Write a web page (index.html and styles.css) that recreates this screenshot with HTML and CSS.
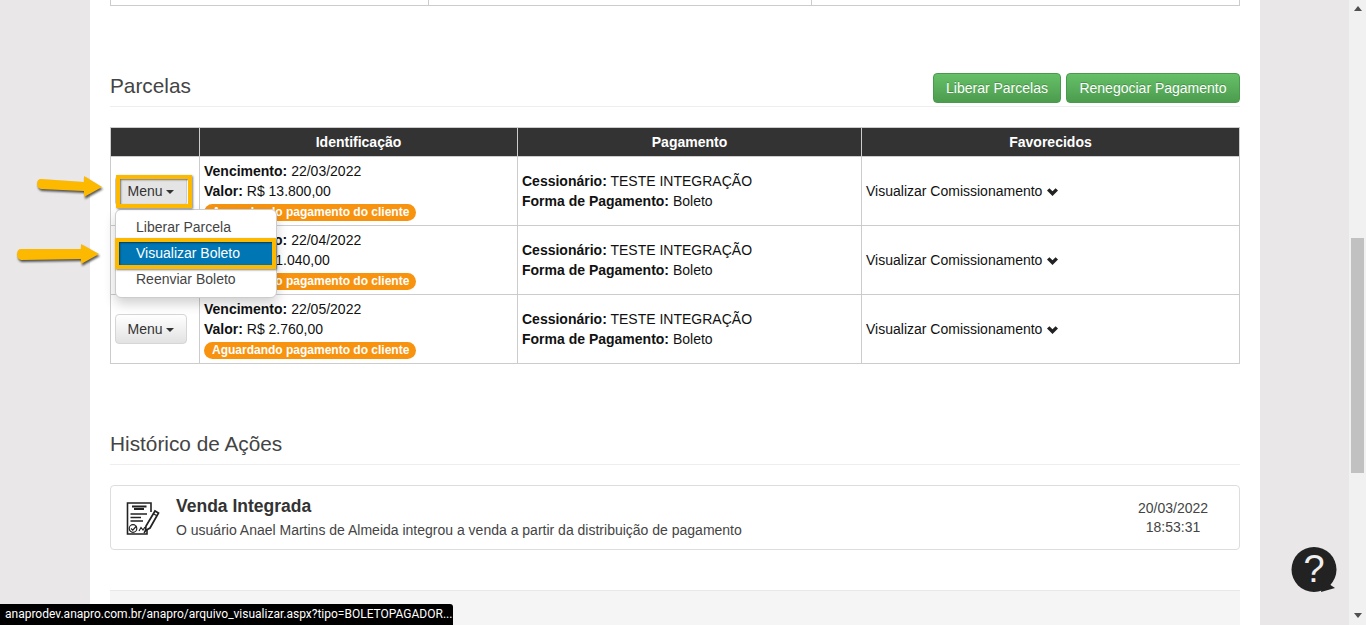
FILE: index.html
```html
<!DOCTYPE html>
<html lang="pt-BR">
<head>
<meta charset="utf-8">
<title>Parcelas</title>
<link rel="stylesheet" href="styles.css">
</head>
<body>
<div class="viewport">
  <div class="page">
    <main class="sheet">
      <table class="top-table">
        <tr><td class="top-a"></td><td class="top-b"></td><td></td></tr>
      </table>

      <section class="section-parcelas">
        <header class="section-head">
          <h3 class="section-title">Parcelas</h3>
          <div class="actions">
            <button class="btn btn-green">Liberar Parcelas</button>
            <button class="btn btn-green">Renegociar Pagamento</button>
          </div>
        </header>

        <table class="grid">
          <thead>
            <tr>
              <th class="col-menu"></th>
              <th class="col-id">Identificação</th>
              <th class="col-pay">Pagamento</th>
              <th class="col-fav">Favorecidos</th>
            </tr>
          </thead>
          <tbody>
            <tr>
              <td class="cell-menu">
                <button class="btn btn-menu is-open">Menu <span class="caret"></span></button>
                <ul class="dropdown">
                  <li class="dropdown-item">Liberar Parcela</li>
                  <li class="dropdown-item is-active">Visualizar Boleto</li>
                  <li class="dropdown-item">Reenviar Boleto</li>
                </ul>
              </td>
              <td>
                <div><b>Vencimento:</b> 22/03/2022</div>
                <div><b>Valor:</b> R$ 13.800,00</div>
                <div class="badge-line"><span class="badge">Aguardando pagamento do cliente</span></div>
              </td>
              <td>
                <div><b>Cessionário:</b> TESTE INTEGRAÇÃO</div>
                <div><b>Forma de Pagamento:</b> Boleto</div>
              </td>
              <td>Visualizar Comissionamento <svg class="chev" viewBox="0 0 11 8"><path d="M0 2.6 L2.4 0.2 L5.5 3.2 L8.6 0.2 L11 2.6 L5.5 8 Z"/></svg></td>
            </tr>
            <tr>
              <td class="cell-menu"></td>
              <td>
                <div><b>Vencimento:</b> 22/04/2022</div>
                <div><b>Valor:</b> R$ 11.040,00</div>
                <div class="badge-line"><span class="badge">Aguardando pagamento do cliente</span></div>
              </td>
              <td>
                <div><b>Cessionário:</b> TESTE INTEGRAÇÃO</div>
                <div><b>Forma de Pagamento:</b> Boleto</div>
              </td>
              <td>Visualizar Comissionamento <svg class="chev" viewBox="0 0 11 8"><path d="M0 2.6 L2.4 0.2 L5.5 3.2 L8.6 0.2 L11 2.6 L5.5 8 Z"/></svg></td>
            </tr>
            <tr>
              <td class="cell-menu"><button class="btn btn-menu">Menu <span class="caret"></span></button></td>
              <td>
                <div><b>Vencimento:</b> 22/05/2022</div>
                <div><b>Valor:</b> R$ 2.760,00</div>
                <div class="badge-line"><span class="badge">Aguardando pagamento do cliente</span></div>
              </td>
              <td>
                <div><b>Cessionário:</b> TESTE INTEGRAÇÃO</div>
                <div><b>Forma de Pagamento:</b> Boleto</div>
              </td>
              <td>Visualizar Comissionamento <svg class="chev" viewBox="0 0 11 8"><path d="M0 2.6 L2.4 0.2 L5.5 3.2 L8.6 0.2 L11 2.6 L5.5 8 Z"/></svg></td>
            </tr>
          </tbody>
        </table>
      </section>

      <section class="section-historico">
        <header class="section-head plain">
          <h3 class="section-title">Histórico de Ações</h3>
        </header>
        <article class="event">
          <svg class="event-icon" viewBox="0 0 34 34" fill="none" stroke="#222">
            <path d="M21 25 V32 H1.5 V1 H25 V10" stroke-width="1.6"/>
            <path d="M6 4.5 H20.5 M8 7 H18" stroke-width="2.2"/>
            <path d="M4.5 12 H21 M4.5 15.5 H15 M4.5 19 H17" stroke-width="1.3"/>
            <circle cx="7" cy="26.5" r="3.8" stroke-width="1.2"/>
            <path d="M5 26.5 L6.8 28.2 L10.5 24" stroke-width="1.2"/>
            <path d="M13 29 L15 25.5 L17 28 L19 25" stroke-width="1.2"/>
            <path d="M19.5 28.5 L20 24 L29 9 L32.5 11 L24 26 Z" fill="#fff" stroke-width="1.7"/>
            <path d="M27 11.5 L30.5 13.5 M18 31 L20 28" stroke-width="1.4"/>
          </svg>
          <div class="event-body">
            <h4 class="event-title">Venda Integrada</h4>
            <p class="event-text">O usuário Anael Martins de Almeida integrou a venda a partir da distribuição de pagamento</p>
          </div>
          <div class="event-date">20/03/2022<br>18:53:31</div>
        </article>
      </section>

      <div class="footer-panel"></div>
    </main>
  </div>

  <aside class="scrollbar">
    <span class="sb-up"></span>
    <span class="sb-thumb"></span>
    <span class="sb-down"></span>
  </aside>

  <svg class="arrow arrow-one" viewBox="0 0 70 26"><path d="M5 5 L48 8 L48 2 L66 13 L48 23 L48 17 L5 15 Q1 14 1 10 Q1 5 5 5 Z"/></svg>
  <svg class="arrow arrow-two" viewBox="0 0 88 27"><path d="M5 6 L65 6 L65 1 L83 11 L65 21 L65 16 L5 17 Q1 16 1 11.5 Q1 6 5 6 Z"/></svg>
  <span class="mark mark-button"></span>
  <span class="mark mark-item"></span>

  <div class="help">
    <svg class="help-bubble" viewBox="0 0 46 47"><circle cx="23" cy="23.5" r="22.5"/><path d="M32 34 L44 42 L30 46 Z"/></svg>
    <span class="help-mark">?</span>
  </div>

  <div class="status">anaprodev.anapro.com.br/anapro/arquivo_visualizar.aspx?tipo=BOLETOPAGADOR...</div>
</div>
</body>
</html>
```

FILE: styles.css
```css
* { box-sizing: border-box; }
html, body { margin: 0; height: 100%; overflow: hidden; }
body {
  font-family: "Liberation Sans", Arial, sans-serif;
  font-size: 14px;
  line-height: 20px;
  color: #333;
  background: #e9e7e8;
}
.viewport { position: relative; display: flex; height: 625px; overflow: hidden; }
.page { flex: 1; min-width: 0; padding: 0 89px 0 90px; }
.sheet { width: 1170px; height: 625px; padding: 0 20px; background: #fff; overflow: hidden; }

.top-table { width: 1130px; height: 5px; border-collapse: collapse; table-layout: fixed; }
.top-table td { height: 5px; padding: 0; border: 1px solid #ccc; border-top: 0; }
.top-a { width: 318px; }
.top-b { width: 383px; }

.section-parcelas { margin-top: 67px; }
.section-head {
  display: flex;
  justify-content: space-between;
  align-items: flex-end;
  height: 34px;
  padding-bottom: 3px;
  border-bottom: 1px solid #eee;
}
.section-title { margin: 0 0 5px; font-size: 20.8px; font-weight: 400; line-height: 24px; color: #444; }
.actions { display: flex; gap: 5px; }

.btn {
  font-family: inherit;
  font-size: 14px;
  line-height: 20px;
  border-radius: 4px;
  border: 1px solid transparent;
  cursor: pointer;
}
.btn-green {
  height: 30px;
  padding: 0 12px;
  color: #fff;
  background: linear-gradient(#66c068, #4c9c4e);
  border-color: #4a9a4c;
  text-shadow: 0 -1px 0 rgba(0, 0, 0, .2);
}
.actions .btn-green:first-child { width: 128px; }
.actions .btn-green:last-child { width: 174px; }

.grid { width: 1130px; margin-top: 20px; border-collapse: collapse; table-layout: fixed; color: #111; }
.grid th {
  height: 29px;
  padding: 0;
  color: #fff;
  background: #333;
  border: 1px solid #ccc;
  font-size: 14px;
  text-align: center;
}
.col-menu { width: 89px; }
.col-id { width: 318px; }
.col-pay { width: 344px; }
.grid td { height: 69px; padding: 4px; border: 1px solid #ccc; vertical-align: middle; }
.grid td.cell-menu { position: relative; padding: 4px; }
.badge-line { height: 20px; line-height: 20px; }
.badge {
  display: inline-block;
  height: 17px;
  margin-top: 3px;
  padding: 0 7px 0 8px;
  border-radius: 9px;
  background: #f7930e;
  color: #fff;
  font-size: 12px;
  font-weight: 700;
  line-height: 17px;
  vertical-align: top;
}
.chev { width: 11px; height: 8px; margin-left: 1px; fill: #222; }

.btn-menu {
  display: block;
  width: 72px;
  height: 30px;
  padding: 0;
  color: #333;
  background: linear-gradient(#fff, #e2e2e2);
  border-color: #d6d6d6;
}
.btn-menu.is-open { background: #e4e4e4; border-color: #ccc; }
.caret {
  display: inline-block;
  width: 0;
  height: 0;
  vertical-align: middle;
  border-top: 4px solid #333;
  border-left: 4px solid transparent;
  border-right: 4px solid transparent;
}
.dropdown {
  position: absolute;
  top: 52px;
  left: 4px;
  z-index: 5;
  width: 162px;
  height: 89px;
  margin: 0;
  padding: 5px 0;
  list-style: none;
  background: #fff;
  border: 1px solid #ccc;
  border-radius: 6px;
  box-shadow: 0 6px 12px rgba(0, 0, 0, .18);
}
.dropdown-item { height: 26px; padding: 2px 20px; color: #444; }
.dropdown-item.is-active { color: #fff; background: #0076b5; }

.section-historico { margin-top: 64px; }
.section-head.plain { height: 37px; }
.event {
  display: flex;
  align-items: flex-start;
  height: 65px;
  margin-top: 20px;
  border: 1px solid #ddd;
  border-radius: 4px;
  color: #444;
}
.event-icon { flex: none; width: 34px; height: 34px; margin: 16px 0 0 15px; }
.event-body { flex: 1; padding: 8px 0 0 16px; }
.event-title { margin: 0; font-size: 17.5px; font-weight: 700; line-height: 24px; color: #333; }
.event-text { margin: 2px 0 0; line-height: 20px; }
.event-date { width: 132px; padding-top: 13px; text-align: center; line-height: 19px; }
.footer-panel { height: 40px; margin-top: 40px; background: #f5f5f5; border-top: 1px solid #e8e8e8; }

.scrollbar { position: relative; flex: none; display: flex; flex-direction: column; align-items: center; width: 17px; background: #f1f1f1; }
.sb-up {
  margin-top: 6px;
  border-bottom: 5px solid #505050;
  border-left: 4px solid transparent;
  border-right: 4px solid transparent;
}
.sb-thumb { width: 13px; height: 235px; margin-top: 227px; background: #c1c1c1; }
.sb-down {
  margin-top: auto;
  margin-bottom: 7px;
  border-top: 5px solid #505050;
  border-left: 4px solid transparent;
  border-right: 4px solid transparent;
}

.arrow { position: absolute; fill: #fdb900; filter: drop-shadow(1px 2px 1px rgba(0, 0, 0, .65)); }
.arrow-one { left: 36px; top: 174px; width: 70px; height: 26px; }
.arrow-two { left: 16px; top: 243px; width: 88px; height: 27px; }
.mark { position: absolute; border: 4px solid #fdb900; box-shadow: 1px 1px 2px rgba(0, 0, 0, .5), inset 1px 1px 2px rgba(0, 0, 0, .5); z-index: 6; }
.mark-button { left: 116px; top: 175px; width: 76px; height: 33px; }
.mark-item { left: 115px; top: 238px; width: 161px; height: 31px; }

.help { position: absolute; left: 1291px; top: 546px; width: 46px; height: 47px; z-index: 7; }
.help-bubble { display: block; width: 46px; height: 47px; fill: #222; }
.help-mark {
  position: absolute;
  inset: 0 0 2px 0;
  display: flex;
  align-items: center;
  justify-content: center;
  color: #eee;
  font-size: 38px;
  font-weight: 400;
  line-height: 1;
}

.status {
  position: absolute;
  left: 0;
  bottom: 0;
  z-index: 8;
  width: 453px;
  height: 21px;
  padding: 0 0 0 5px;
  background: #000;
  border-top-right-radius: 3px;
  color: #fff;
  font-family: Roboto, sans-serif;
  font-size: 12px;
  line-height: 21px;
  white-space: nowrap;
  overflow: hidden;
}
```
